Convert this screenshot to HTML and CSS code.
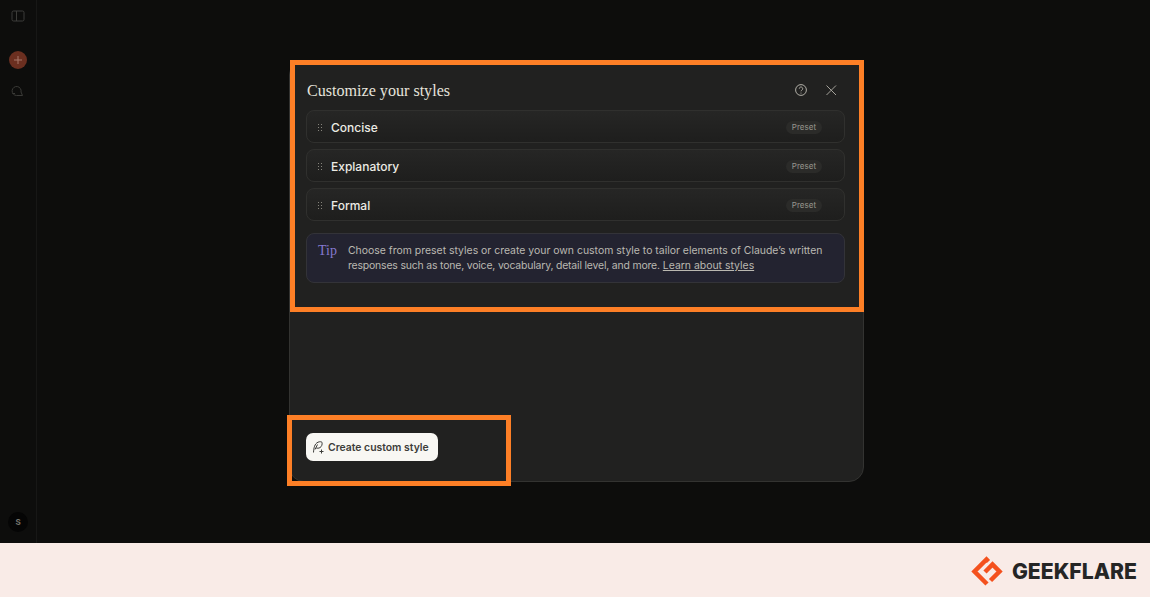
FILE: index.html
```html
<!DOCTYPE html>
<html lang="en">
<head>
<meta charset="utf-8">
<title>Customize your styles</title>
<link rel="stylesheet" href="styles.css">
</head>
<body>
<div class="app">
  <aside class="sidebar">
    <div class="side-top">
      <svg class="side-icon" width="14" height="12" viewBox="0 0 14 12" fill="none"><rect x="1" y="1" width="12" height="10" rx="1.5" stroke="#3d3d3a"/><path d="M5.5 1v10" stroke="#3d3d3a"/></svg>
      <div class="new-btn"><svg width="8" height="8" viewBox="0 0 8 8"><path d="M4 0v8M0 4h8" stroke="#a8796b" stroke-width="1"/></svg></div>
      <svg class="side-icon" width="14" height="14" viewBox="0 0 14 14" fill="none"><path d="M11.500 12.500H5.500a4.500 4.500 0 1 1 4.500-3.500l1.500 3.500M1.500 10.500h2.500" stroke="#3a3a37"/></svg>
    </div>
    <div class="avatar">S</div>
  </aside>
  <main class="main">
    <section class="modal">
      <header class="modal-head">
        <h1 class="modal-title">Customize your styles</h1>
        <div class="modal-actions">
          <svg width="14" height="14" viewBox="0 0 14 14" fill="none"><circle cx="7" cy="7" r="5.4" stroke="#b0aea6"/><path d="M5.300 5.600a1.700 1.700 0 1 1 2.600 1.500c-.6.400-.9.700-.9 1.200" stroke="#b0aea6"/><circle cx="7" cy="10" r=".6" fill="#b0aea6"/></svg>
          <svg width="14" height="14" viewBox="0 0 14 14" fill="none"><path d="M2.500 2.500l9.500 9.500M12 2.500l-9.500 9.500" stroke="#a5a39b" stroke-width="1"/></svg>
        </div>
      </header>
      <ul class="style-list">
        <li class="style-row"><span class="grip"></span><span class="style-name">Concise</span><span class="badge">Preset</span></li>
        <li class="style-row"><span class="grip"></span><span class="style-name">Explanatory</span><span class="badge">Preset</span></li>
        <li class="style-row"><span class="grip"></span><span class="style-name">Formal</span><span class="badge">Preset</span></li>
      </ul>
      <div class="tip">
        <span class="tip-label">Tip</span>
        <p class="tip-text">Choose from preset styles or create your own custom style to tailor elements of Claude’s written <span class="tip-tight">responses such as tone, voice, vocabulary, detail level, and more.</span> <a href="#" class="tip-link">Learn about styles</a></p>
      </div>
      <div class="modal-foot">
        <button class="create-btn">
          <svg width="13" height="14" viewBox="0 0 13 14" fill="none"><path d="M1.500 12.500C1.800 8 2.500 3.800 6 2.200c1.500-.7 3.300-.6 4 .1.500 2-.3 4.300-2 5.300-1.300.7-2.700.7-3.800.4M5.500 4.500 3 9.500" stroke="#3d3d3a" stroke-width="1"/><path d="M9.500 9.500v4M7.500 11.500h4" stroke="#3d3d3a" stroke-width="1"/></svg>
          Create custom style
        </button>
      </div>
    </section>
  </main>
</div>
<footer class="brand-bar">
  <div class="brand">
    <svg class="brand-mark" width="33" height="33" viewBox="0 0 33 33" fill="none"><path d="M18.500 6.500 16.500 4.500 4.500 16.500 17 29" stroke="#f4511e" stroke-width="4.500"/><path d="M15 17 22.500 9.500 29.500 16.500 20.500 25.500" stroke="#f4511e" stroke-width="4.500"/></svg>
    <span class="brand-name">GEEKFLARE</span>
  </div>
</footer>
<div class="highlight highlight-top"></div>
<div class="highlight highlight-bottom"></div>
</body>
</html>
```
FILE: styles.css
```css
* { box-sizing: border-box; }
html, body { margin: 0; padding: 0; height: 597px; overflow: hidden; }
body { position: relative; font-family: "Inter", "Liberation Sans", sans-serif; background: #0d0d0c; }
.app { display: flex; height: 543px; background: #0d0d0c; }
.sidebar { width: 37px; flex: none; border-right: 1px solid #171716; display: flex; flex-direction: column; align-items: center; justify-content: space-between; padding: 10px 0 11px; }
.side-top { display: flex; flex-direction: column; align-items: center; }
.side-icon { display: block; }
.new-btn { width: 18px; height: 18px; border-radius: 50%; background: #6b2f20; display: flex; align-items: center; justify-content: center; margin: 29px 0 14px; }
.avatar { width: 20px; height: 20px; border-radius: 50%; background: #050505; color: #77756e; font-size: 8px; font-weight: 700; display: flex; align-items: center; justify-content: center; }
.main { flex: 1; padding: 60px 0 0 252px; }
.modal { width: 575px; height: 422px; background: #212120; border: 1px solid #333331; border-radius: 15px; padding: 20px 18px 20px 16px; display: flex; flex-direction: column; }
.modal-head { display: flex; align-items: center; justify-content: space-between; height: 19px; margin-bottom: 10px; }
.modal-title { margin: -1px 0 0 1px; font: 400 16.1px/19px "Liberation Serif", serif; color: #e6e4dc; }
.modal-actions { display: flex; gap: 16px; margin: -1px 7px 0 0; align-items: center; }
.modal-actions svg { display: block; }
.style-list { list-style: none; margin: 0; padding: 0; display: flex; flex-direction: column; gap: 6px; }
.style-row { height: 33px; border: 1px solid #30302e; border-radius: 8px; background: linear-gradient(#262625, #1e1e1d); display: flex; align-items: center; padding: 1px 22px 0 10px; }
.grip { width: 6px; height: 9px; margin-right: 8px; background-image: radial-gradient(circle, #86847c 0.8px, transparent 0.9px); background-size: 3px 3px; flex: none; }
.style-name { flex: 1; font-size: 12px; font-weight: 500; color: #ecebe4; }
.badge { font-size: 8px; line-height: 13px; padding: 0 6px; border-radius: 7px; background: #2b2b29; color: #98968e; }
.tip { margin-top: 12px; height: 50px; border: 1px solid #333338; border-radius: 8px; background: #232330; display: flex; padding: 9px 11px; }
.tip-label { width: 30px; flex: none; font: 400 14px/16px "Liberation Serif", serif; color: #8579cf; }
.tip-text { margin: 0; font-size: 10.45px; line-height: 15px; color: #bab8b0; }
.tip-tight { letter-spacing: -0.18px; }
.tip-link { color: #bab8b0; text-decoration: underline; }
.modal-foot { margin-top: auto; }
.create-btn { height: 28px; width: 132px; border: 0; border-radius: 7px; background: #f8f7f3; color: #3d3d3a; font: 600 10.400px "Inter", sans-serif; display: flex; align-items: center; gap: 3px; padding: 0 6px; }
.create-btn svg { flex: none; }
.brand-bar { height: 54px; background: #f9ebe7; display: flex; justify-content: flex-end; align-items: center; padding: 3px 13px 0 0; }
.brand { display: flex; align-items: center; gap: 9px; }
.brand-mark { display: block; }
.brand-name { font: 800 21.200px/1 "Inter", sans-serif; color: #252525; }
.highlight { position: absolute; border: 5px solid #fd7f26; pointer-events: none; }
.highlight-top { left: 290px; top: 60px; width: 574px; height: 252px; }
.highlight-bottom { left: 287px; top: 415px; width: 224px; height: 71px; }
```
